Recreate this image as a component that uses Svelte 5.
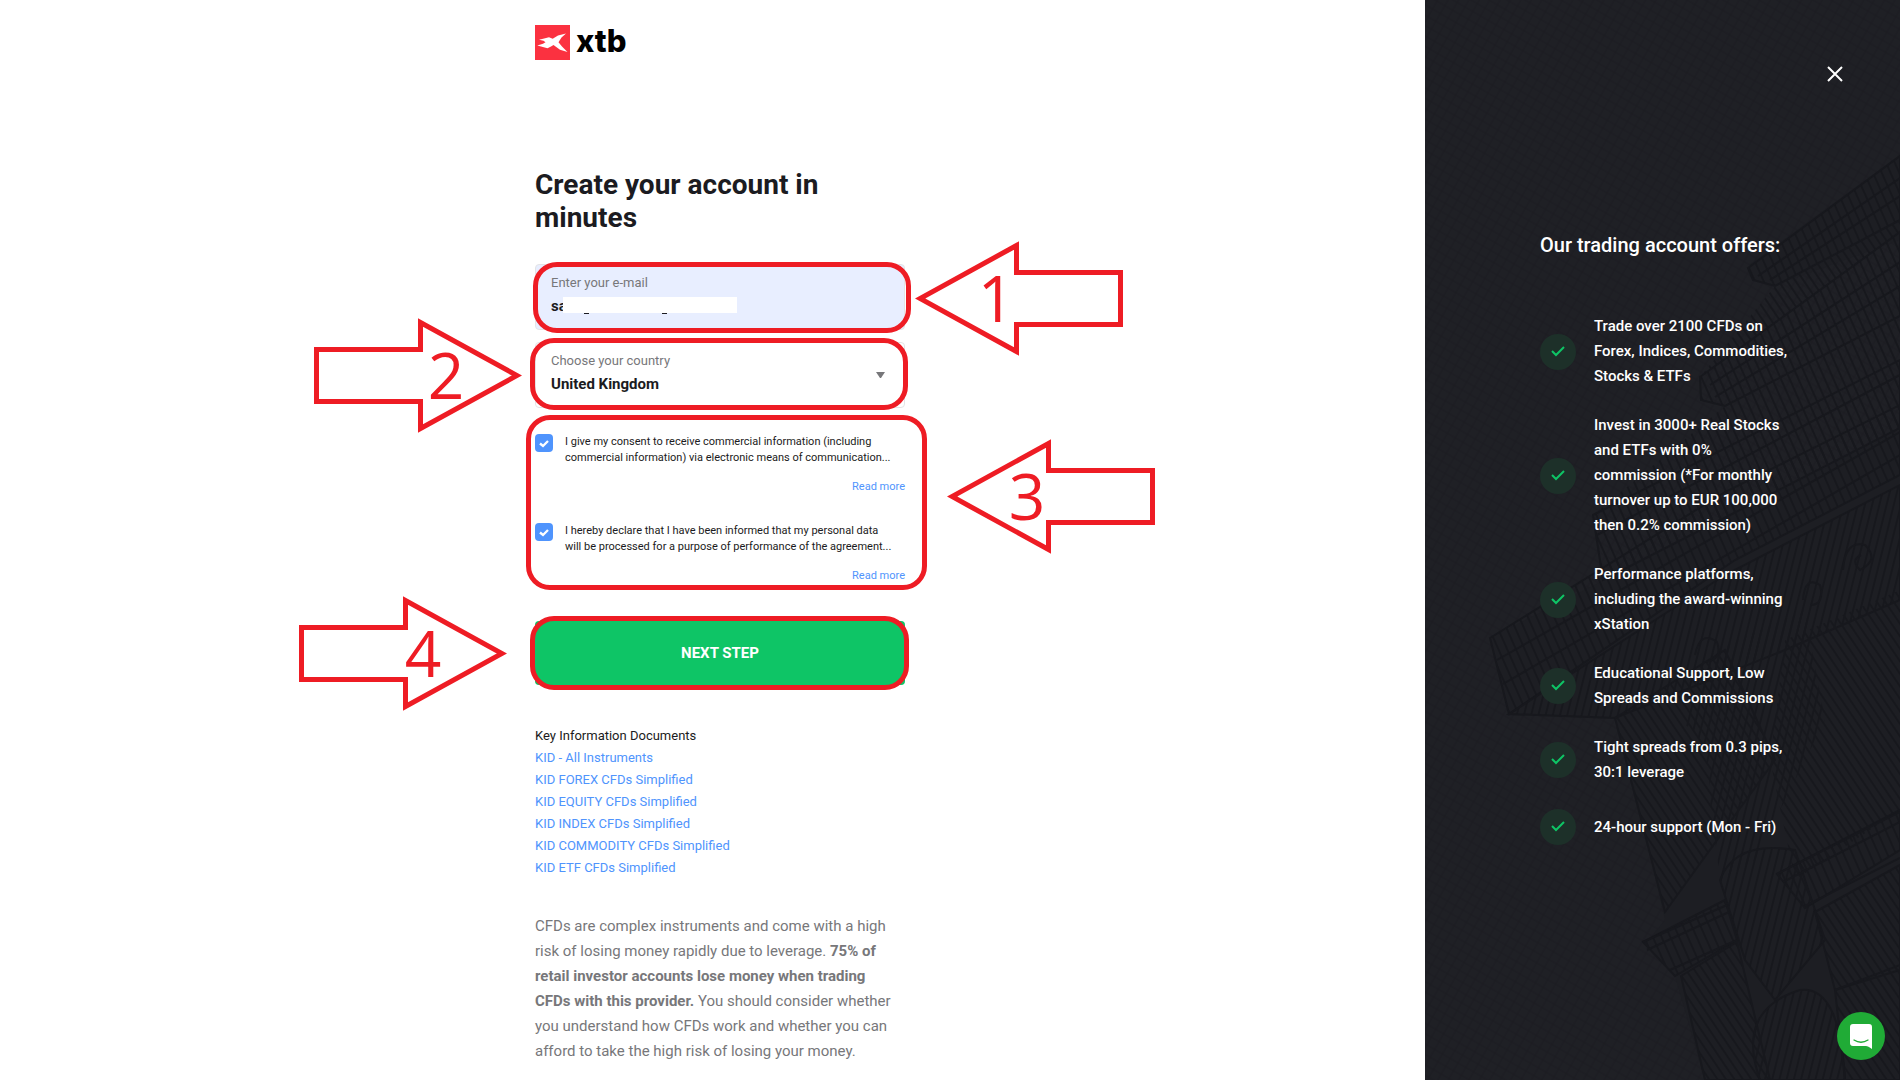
<script>
  let email = 'sa';
  let country = 'United Kingdom';

  let consents = [
    {
      checked: true,
      text: 'I give my consent to receive commercial information (including\ncommercial information) via electronic means of communication...'
    },
    {
      checked: true,
      text: 'I hereby declare that I have been informed that my personal data\nwill be processed for a purpose of performance of the agreement...'
    }
  ];

  const documents = [
    'KID - All Instruments',
    'KID FOREX CFDs Simplified',
    'KID EQUITY CFDs Simplified',
    'KID INDEX CFDs Simplified',
    'KID COMMODITY CFDs Simplified',
    'KID ETF CFDs Simplified'
  ];

  const offers = [
    'Trade over 2100 CFDs on\nForex, Indices, Commodities,\nStocks & ETFs',
    'Invest in 3000+ Real Stocks\nand ETFs with 0%\ncommission (*For monthly\nturnover up to EUR 100,000\nthen 0.2% commission)',
    'Performance platforms,\nincluding the award-winning\nxStation',
    'Educational Support, Low\nSpreads and Commissions',
    'Tight spreads from 0.3 pips,\n30:1 leverage',
    '24-hour support (Mon - Fri)'
  ];

  // outlines of the step arrows, pointing at the form from either side
  const arrows = {
    right: '2.5,31.5 106.5,31.5 106.5,4.5 203,57.5 106.5,110.5 106.5,83.5 2.5,83.5',
    left: '205.5,31.5 101.5,31.5 101.5,4.5 5,57.5 101.5,110.5 101.5,83.5 205.5,83.5'
  };
</script>

{#snippet step(number, direction, digitX)}
  <div class="outline outline-{number}"></div>
  <svg class="arrow arrow-{number}" viewBox="0 0 208 115" width="208" height="115">
    <polygon points={arrows[direction]} />
    <text x={digitX} y="81" text-anchor="middle">{number}</text>
  </svg>
{/snippet}

<div class="page">
  <main>
    <div class="column">
      <a class="logo" href="#home" aria-label="xtb">
        <svg viewBox="0 0 35 35" width="35" height="35">
          <rect width="35" height="35" fill="#fb3140" />
          <path fill="#fff" d="M31 8.500 26.500 12.500 23.500 17.300 27 21.500 32.500 27 25 24.800 18.500 20 16 21.500 12.500 23.200 2.300 20.500 8 18.800 10.500 17.300 8.500 15.800 4 14.800 14 12.300 17.700 13.700 23 10.500Z" />
        </svg>
        <span>xtb</span>
      </a>

      <h1>Create your account in<br />minutes</h1>

      <form on:submit|preventDefault>
        <div class="field email">
          <label for="email">Enter your e-mail</label>
          <input id="email" type="text" bind:value={email} />
          <span class="mask"></span>
          {@render step(1, 'left', 81)}
        </div>

        <div class="field">
          <label for="country">Choose your country</label>
          <select id="country" bind:value={country}>
            <option>United Kingdom</option>
          </select>
          <svg class="caret" viewBox="0 0 9 6" width="9" height="6"><path d="M0 0H9L5 6H4Z" /></svg>
          {@render step(2, 'right', 132)}
        </div>

        <div class="consents">
          {#each consents as consent, i}
            <div class="consent">
              <input id="consent-{i}" type="checkbox" bind:checked={consent.checked} />
              <label for="consent-{i}">{consent.text}</label>
              <a href="#more">Read more</a>
            </div>
          {/each}
          {@render step(3, 'left', 80)}
        </div>

        <div class="submit">
          <button type="submit">NEXT STEP</button>
          {@render step(4, 'right', 124)}
        </div>
      </form>

      <section class="documents">
        <p>Key Information Documents</p>
        <ul>
          {#each documents as name}
            <li><a href="#kid">{name}</a></li>
          {/each}
        </ul>
      </section>

      <p class="risk">
        CFDs are complex instruments and come with a high<br />
        risk of losing money rapidly due to leverage. <b>75% of<br />
        retail investor accounts lose money when trading<br />
        CFDs with this provider.</b> You should consider whether<br />
        you understand how CFDs work and whether you can<br />
        afford to take the high risk of losing your money.
      </p>
    </div>
  </main>

  <aside>
    <!-- engraved building behind the offers -->
    <svg class="engraving" viewBox="0 0 475 1080" preserveAspectRatio="xMaxYMin slice" aria-hidden="true">
      <defs>
        <pattern id="sky" width="9" height="9" patternUnits="userSpaceOnUse" patternTransform="rotate(30)">
          <path d="M2 0V9M0 4H9" stroke="#1b1c21" />
        </pattern>
        <pattern id="ribs" width="8" height="60" patternUnits="userSpaceOnUse" patternTransform="rotate(-24)">
          <path d="M3 0V60" stroke="#17181d" stroke-width="2" />
        </pattern>
        <pattern id="flutes" width="7" height="60" patternUnits="userSpaceOnUse" patternTransform="rotate(-34)">
          <path d="M3 0V60" stroke="#17181d" stroke-width="2" />
        </pattern>
        <pattern id="shade" width="7" height="60" patternUnits="userSpaceOnUse" patternTransform="rotate(14)">
          <path d="M3 0V60" stroke="#17181d" stroke-width="2" />
        </pattern>
      </defs>
      <rect width="475" height="1080" fill="url(#sky)" />
      <g stroke="#17181d" stroke-width="2" fill="#1d1e23">
        <path d="M324 265 475 155V430L65 638 84 714 190 718 210 790 240 920 220 944 250 976 280 1080H475V240L350 285 330 280Z" stroke="none" />
        <path d="M323 268 475 156V220L350 286 328 280Z" fill="url(#ribs)" />
        <path d="M350 286 475 220V232L275 377Z" fill="url(#flutes)" stroke="none" />
        <path d="M275 377 475 232V316L300 406 276 400Z" fill="url(#ribs)" />
        <path d="M300 406 475 316V360L168 515Z" fill="url(#ribs)" stroke="none" />
        <path d="M168 515 475 360V428L178 580Z" fill="url(#ribs)" />
        <path d="M65 638 300 492 475 405V475L310 560 84 714Z" fill="url(#ribs)" />
        <path d="M84 714 300 575 475 485V600L360 650 190 718Z" fill="url(#shade)" />
        <path d="M190 718 300 650 350 760 240 912Z" fill="url(#flutes)" />
        <path d="M258 724Q285 735 285 800L295 880 330 860 400 720 380 610 290 650Z" fill="url(#shade)" stroke="none" />
        <path d="M360 640 475 590V810L370 880 345 760Z" fill="url(#flutes)" stroke="none" />
        <path d="M295 880Q310 840 370 850L400 940 350 1000 320 960Z" fill="url(#shade)" />
        <path d="M218 942 300 900 312 940 250 976Z" fill="url(#ribs)" />
        <path d="M218 942 302 905M222 950 304 912M245 970 312 940" fill="none" />
        <path d="M352 874 475 810V850L380 908Z" fill="url(#ribs)" />
        <path d="M352 874 475 812M358 882 475 822M380 906 475 858" fill="none" />
        <path d="M256 976 312 942 345 1080H280Z" fill="url(#flutes)" />
        <path d="M390 912 475 865V970L410 990Z" fill="url(#flutes)" />
        <path d="M335 1080Q310 1010 375 990Q415 985 420 1080Z" fill="url(#shade)" />
        <path d="M410 990 475 965V1080H420Z" fill="url(#flutes)" />
        <path d="M333 276 475 178M345 280 475 196M285 385 475 262M290 397 475 286M172 535 475 375M72 660 475 432M78 684 475 455" fill="none" />
        <path d="M418 570Q420 540 440 545Q455 560 435 570Q425 560 436 555M378 600Q380 575 395 585Q400 605 385 605M270 655Q275 630 292 642Q298 660 280 662" fill="none" />
      </g>
    </svg>

    <button class="close" type="button" aria-label="Close">
      <svg viewBox="0 0 16 16" width="16" height="16"><path d="M1 1 15 15M15 1 1 15" /></svg>
    </button>

    <div class="offers">
      <h2>Our trading account offers:</h2>
      <ul>
        {#each offers as offer}
          <li>
            <span class="tick">
              <svg viewBox="0 0 14 12" width="14" height="12"><path d="M1 5 5 9 13 1" /></svg>
            </span>
            <span>{offer}</span>
          </li>
        {/each}
      </ul>
    </div>

    <button class="chat" type="button" aria-label="Open chat">
      <svg viewBox="0 0 22 25" width="22" height="25">
        <path fill="#fff" d="M3 0H19Q22 0 22 3V25Q18 22 16 22H3Q0 22 0 19V3Q0 0 3 0Z" />
        <path fill="none" stroke="#20ab36" stroke-width="1.3" stroke-linecap="round" d="M4 16Q11 20.5 18 16" />
      </svg>
    </button>
  </aside>
</div>

<style>
  :global(body) {
    margin: 0;
  }

  .page {
    display: grid;
    grid-template-columns: minmax(0, 3fr) minmax(0, 1fr);
    min-height: 100vh;
    font-family: Roboto, 'Liberation Sans', sans-serif;
    font-size: 14px;
    color: #1b1b21;
    background: #fff;
  }

  a {
    color: #4f94fd;
    text-decoration: none;
  }

  ul {
    margin: 0;
    padding: 0;
    list-style: none;
  }

  main {
    display: flex;
    justify-content: center;
    padding: 25px 0 0 15px;
  }

  .column {
    width: 370px;
  }

  .logo {
    display: flex;
    align-items: center;
    gap: 6px;
    height: 35px;
    color: #000;
    font: 800 31px/30px Inter, sans-serif;
  }

  .logo span {
    padding-bottom: 4px;
  }

  h1 {
    margin: 108px 0 30px;
    font-size: 28px;
    line-height: 33px;
    font-weight: 700;
    white-space: nowrap;
  }

  .field {
    position: relative;
    display: flex;
    flex-direction: column;
    box-sizing: border-box;
    height: 66px;
    margin-bottom: 12px;
    padding: 8px 15px;
    border: 1px solid #e4e4e6;
    border-radius: 4px;
  }

  .email {
    background: #e8eeff;
  }

  .field label {
    font-size: 13px;
    line-height: 20px;
    color: #77777a;
  }

  .field input,
  .field select {
    appearance: none;
    height: 26px;
    margin: 0;
    padding: 0;
    border: 0;
    outline: 0;
    background: none;
    font: 700 15px/26px Roboto, sans-serif;
    color: #1b1b21;
  }

  .mask {
    position: absolute;
    top: 32px;
    left: 27px;
    width: 174px;
    height: 16px;
    background: #fff;
  }

  /* descenders left showing under the mask */
  .mask::before,
  .mask::after {
    content: '';
    position: absolute;
    top: 16px;
    left: 21px;
    width: 5px;
    height: 1px;
    background: #1b1b21;
  }

  .mask::after {
    left: 99px;
  }

  .caret {
    position: absolute;
    top: 29px;
    right: 19px;
    fill: #77777a;
  }

  .consents {
    position: relative;
    display: grid;
    gap: 28px;
    margin-top: 26px;
  }

  .consent {
    display: grid;
    grid-template-columns: 18px 1fr;
    column-gap: 12px;
    row-gap: 13px;
    font-size: 11px;
    line-height: 16px;
  }

  .consent label {
    white-space: pre;
  }

  .consent input {
    appearance: none;
    width: 18px;
    height: 18px;
    margin: 0;
    border-radius: 4px;
    background: #4f94fd;
  }

  .consent input:checked {
    background-image: url("data:image/svg+xml,%3Csvg xmlns='http://www.w3.org/2000/svg' viewBox='0 0 18 18'%3E%3Cpath d='M5 9.500 8 12 13 7' fill='none' stroke='white' stroke-width='2.300'/%3E%3C/svg%3E");
  }

  .consent a {
    grid-column: 2;
    justify-self: end;
  }

  .submit {
    position: relative;
    margin-top: 37px;
  }

  .submit button {
    display: block;
    width: 100%;
    height: 64px;
    border: 0;
    border-radius: 4px;
    background: #0ec566;
    color: #fff;
    font: 700 15px Roboto, sans-serif;
  }

  .outline {
    position: absolute;
    box-sizing: border-box;
    border: 5px solid #ee1c24;
    border-radius: 24px;
    pointer-events: none;
  }

  .outline-1 {
    inset: -3px -7px -4px -3px;
  }

  .outline-2 {
    inset: -5px -4px -3px -6px;
  }

  .outline-3 {
    inset: -19px -22px -6px -9px;
  }

  .outline-4 {
    inset: -5px -4px -5px -5px;
  }

  .arrow {
    position: absolute;
    pointer-events: none;
  }

  .arrow polygon {
    fill: #fff;
    stroke: #ee1c24;
    stroke-width: 5;
    stroke-miterlimit: 10;
  }

  .arrow text {
    fill: #ee1c24;
    font: 400 64px 'Open Sans', 'Noto Sans', sans-serif;
  }

  .arrow-1 {
    top: -24px;
    left: 379px;
  }

  .arrow-2 {
    top: -25px;
    right: 382px;
  }

  .arrow-3 {
    top: 5px;
    left: 412px;
  }

  .arrow-4 {
    top: -25px;
    right: 398px;
  }

  .documents {
    margin-top: 40px;
    font-size: 13px;
    line-height: 22px;
  }

  .documents p {
    margin: 0;
  }

  .risk {
    margin: 35px 0 0;
    font-size: 15px;
    line-height: 25px;
    color: #77777a;
    white-space: nowrap;
  }

  aside {
    position: relative;
    padding-left: 115px;
    background: #1f2025;
    color: #fff;
  }

  .engraving {
    position: absolute;
    inset: 0;
    width: 100%;
    height: 100%;
  }

  .close {
    position: absolute;
    top: 66px;
    right: 57px;
    display: flex;
    padding: 0;
    border: 0;
    background: none;
  }

  .close path {
    stroke: #fff;
    stroke-width: 2;
  }

  .offers {
    position: relative;
    padding-top: 232px;
    white-space: nowrap;
  }

  h2 {
    margin: 0 0 56px;
    font-size: 20px;
    line-height: 26px;
    font-weight: 500;
  }

  .offers ul {
    display: grid;
    gap: 24px;
  }

  .offers li {
    display: flex;
    align-items: center;
    gap: 18px;
    font-size: 15px;
    line-height: 25px;
    font-weight: 500;
    white-space: pre;
  }

  .tick {
    display: grid;
    place-items: center;
    flex: none;
    width: 36px;
    height: 36px;
    border-radius: 50%;
    background: #1d3029;
  }

  .tick path {
    fill: none;
    stroke: #0ec566;
    stroke-width: 2;
  }

  .chat {
    position: absolute;
    right: 15px;
    bottom: 20px;
    display: grid;
    place-items: center;
    width: 48px;
    height: 48px;
    padding: 0;
    border: 0;
    border-radius: 50%;
    background: #20ab36;
  }
</style>
